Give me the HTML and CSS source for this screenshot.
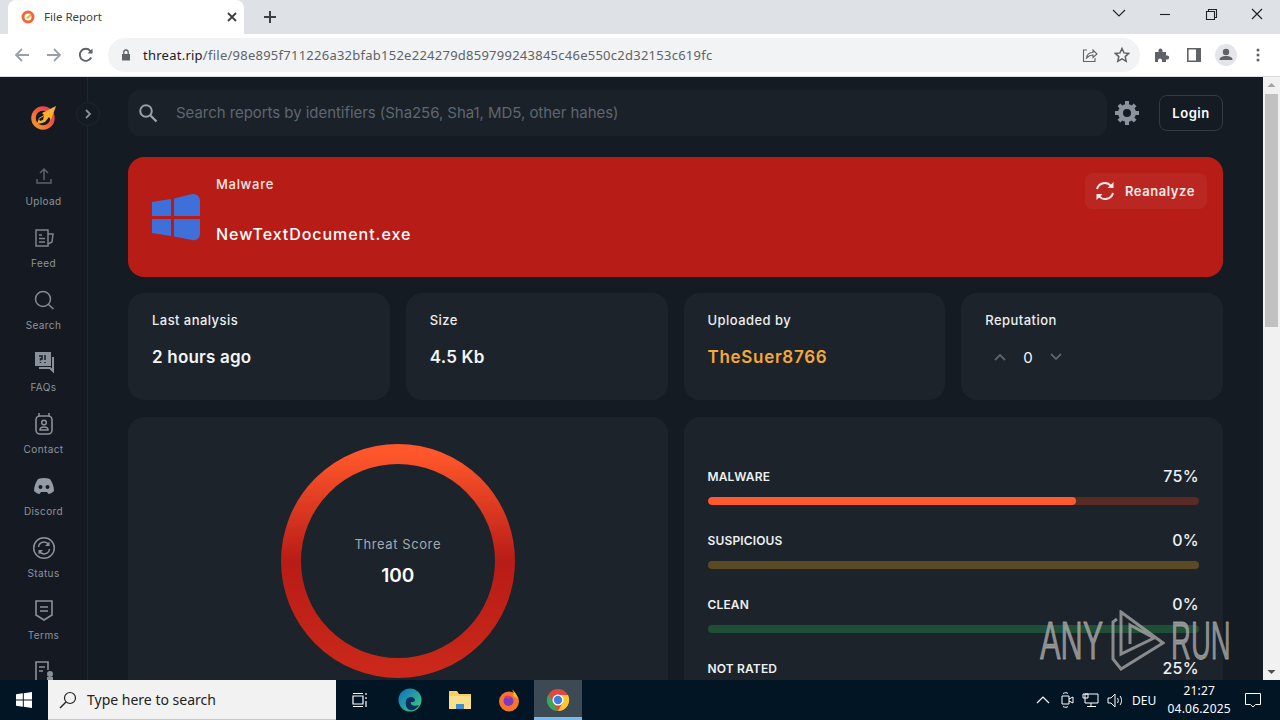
FILE: index.html
```html
<!DOCTYPE html>
<html lang="en">
<head>
    <meta charset="UTF-8">
    <title>File Report</title>
    <link rel="stylesheet" href="styles.css">
</head>
<body>
    <div class="tabstrip">
        <div class="tab">
            <svg class="favicon" width="16" height="16" viewBox="0 0 16 16"><circle cx="8" cy="8" r="5" fill="none" stroke="#f0663a" stroke-width="3"/><path d="M6 9l5-5v3l-3 3z" fill="#f9b233"/></svg>
            <span class="tab-title">File Report</span>
            <svg width="12" height="12" viewBox="0 0 12 12"><path d="M2 2l8 8M10 2l-8 8" stroke="#3c4043" stroke-width="1.8"/></svg>
        </div>
        <svg class="new-tab" width="14" height="14" viewBox="0 0 14 14"><path d="M7 1v12M1 7h12" stroke="#3c4043" stroke-width="2"/></svg>
        <div class="win-controls">
            <svg width="46" height="30" viewBox="0 0 46 30"><path d="M17 10l6 6 6-6" fill="none" stroke="#222" stroke-width="1.1"/></svg>
            <svg width="46" height="30" viewBox="0 0 46 30"><path d="M18 14.5h10" stroke="#222" stroke-width="1.1"/></svg>
            <svg width="46" height="30" viewBox="0 0 46 30"><path d="M18.5 11.5h8v8h-8zM20.5 11.5v-2h8v8h-2" fill="none" stroke="#222" stroke-width="1.1"/></svg>
            <svg width="46" height="30" viewBox="0 0 46 30"><path d="M18 9l10 10M28 9L18 19" stroke="#222" stroke-width="1.2"/></svg>
        </div>
    </div>

    <div class="toolbar">
        <div class="nav-btns">
            <svg width="16" height="16" viewBox="0 0 16 16"><path d="M15 8H2M8 2L2 8l6 6" fill="none" stroke="#9aa0a6" stroke-width="1.8"/></svg>
            <svg width="16" height="16" viewBox="0 0 16 16"><path d="M1 8h13M8 2l6 6-6 6" fill="none" stroke="#9aa0a6" stroke-width="1.8"/></svg>
            <svg width="16" height="16" viewBox="0 0 16 16"><path d="M13.2 10.5A6 6 0 1 1 12.3 3.8L14 5.5" fill="none" stroke="#5f6368" stroke-width="1.9"/><path d="M14.5 1.5v5h-5z" fill="#5f6368"/></svg>
        </div>
        <div class="omnibox">
            <svg width="10" height="12" viewBox="0 0 10 12"><path d="M1 5h8v6.500H1z" fill="#5f6368"/><path d="M2.800 5V3.200a2.200 2.200 0 0 1 4.400 0V5" fill="none" stroke="#5f6368" stroke-width="1.300"/></svg>
            <span class="url"><b>threat.rip</b>/file/98e895f711226a32bfab152e224279d859799243845c46e550c2d32153c619fc</span>
            <svg class="omni-share" width="16" height="16" viewBox="0 0 16 16"><path d="M5 3H1.500v11.500H13V11" fill="none" stroke="#5f6368" stroke-width="1.100"/><path d="M4.500 11c.5-3.500 3-5.500 6.500-5.500V3l4 4-4 3.500V8c-2.500 0-4.500 1-6.500 3z" fill="none" stroke="#5f6368" stroke-width="1.100"/></svg>
            <svg class="omni-star" width="16" height="16" viewBox="0 0 16 16"><path d="M8 1.500l2 4.400 4.700.5-3.500 3.200 1 4.700L8 11.900l-4.200 2.400 1-4.700-3.500-3.200 4.700-.5z" fill="none" stroke="#5f6368" stroke-width="1.500"/></svg>
        </div>
        <div class="tool-icons">
            <span class="tool-btn"><svg width="16" height="16" viewBox="0 0 16 16"><path d="M1 5h3.500V3.500a2 2 0 0 1 4 0V5H12v3.500h1.200a2 2 0 0 1 0 4H12V15H8v-1.500a2 2 0 0 0-4 0V15H1z" fill="#5f6368"/></svg></span>
            <span class="tool-btn"><svg width="14" height="14" viewBox="0 0 14 14"><path d="M.8.800h12.400v12.400H.8z" fill="#fff" stroke="#5f6368" stroke-width="1.600"/><path d="M9 1h4v12H9z" fill="#5f6368"/></svg></span>
            <span class="tool-btn"><svg width="22" height="22" viewBox="0 0 22 22"><circle cx="11" cy="11" r="11" fill="#e3e5ea"/><circle cx="11" cy="8" r="3.200" fill="#5f6368"/><path d="M4.500 16c0-3 3-4 6.500-4s6.500 1 6.500 4z" fill="#5f6368"/></svg></span>
            <span class="tool-btn"><svg width="4" height="14" viewBox="0 0 4 14"><circle cx="2" cy="2" r="1.500" fill="#5f6368"/><circle cx="2" cy="7" r="1.500" fill="#5f6368"/><circle cx="2" cy="12" r="1.500" fill="#5f6368"/></svg></span>
        </div>
    </div>

    <div class="viewport">
        <aside class="sidebar">
            <div class="side-top">
                <svg width="26" height="26" viewBox="0 0 26 26">
                    <defs><linearGradient id="logoRing" x1="0" y1="1" x2="1" y2="0"><stop offset="0" stop-color="#f79a2a"/><stop offset=".55" stop-color="#ef5a3c"/><stop offset="1" stop-color="#d93a60"/></linearGradient></defs>
                    <circle cx="12" cy="14" r="9.500" fill="none" stroke="url(#logoRing)" stroke-width="4.500"/>
                    <path d="M6 20l2-6 5-3-2-2 14-7-5 14-2-3-4 5-3 1z" fill="#f7b02f"/>
                    <path d="M8 15l5-3-1 4-3 1z" fill="#151b23"/>
                </svg>
            </div>
            <span class="side-toggle"><svg width="8" height="10" viewBox="0 0 8 10"><path d="M2 1l4 4-4 4" fill="none" stroke="#8b919a" stroke-width="1.800"/></svg></span>
            <nav class="side-nav">
                <a class="nav-item"><svg width="24" height="24" viewBox="0 0 24 24"><path d="M12 16V6M8 9l4-4 4 4M5 15v4h14v-4" fill="none" stroke="#5c626b" stroke-width="1.500"/></svg>Upload</a>
                <a class="nav-item"><svg width="24" height="24" viewBox="0 0 24 24"><path d="M4 4h12v16H4zM16 8h5l-1 8-4 2M7 9h3M7 12.500h6M7 16h6" fill="none" stroke="#7e848d" stroke-width="1.500"/></svg>Feed</a>
                <a class="nav-item"><svg width="24" height="24" viewBox="0 0 24 24"><circle cx="11" cy="11" r="7.500" fill="none" stroke="#858b94" stroke-width="1.500"/><path d="M16.500 16.500l5 4.500" stroke="#858b94" stroke-width="1.500"/></svg>Search</a>
                <a class="nav-item"><svg width="24" height="24" viewBox="0 0 24 24"><path d="M3 2h16v14H3z" fill="#8b919a"/><path d="M21 7v14l-3-3H7" fill="none" stroke="#8b919a" stroke-width="2"/><path d="M7 6h3v3H8.500v1.500M13 5v5M8.500 12v1M13 12v1" stroke="#171c24" stroke-width="1.500" fill="none"/></svg>FAQs</a>
                <a class="nav-item"><svg width="24" height="24" viewBox="0 0 24 24"><rect x="4" y="4" width="16" height="18" rx="4" fill="none" stroke="#8b919a" stroke-width="1.600"/><path d="M7 1v3M17 1v3M8 18c0-4 8-4 8 0z" fill="none" stroke="#8b919a" stroke-width="1.500"/><circle cx="12" cy="10.500" r="2.300" fill="none" stroke="#8b919a" stroke-width="1.500"/></svg>Contact</a>
                <a class="nav-item"><svg width="24" height="24" viewBox="0 0 24 24"><path d="M6 5c4-1.500 8-1.500 12 0 2 3 4 7 4 12-2 2-4 3-5.500 3L15 18H9l-1.500 2C6 20 4 19 2 17c0-5 2-9 4-12z" fill="#959ba4"/><circle cx="8.500" cy="13" r="2" fill="#171c24"/><circle cx="15.500" cy="13" r="2" fill="#171c24"/></svg>Discord</a>
                <a class="nav-item"><svg width="24" height="24" viewBox="0 0 24 24"><circle cx="12" cy="12" r="10.300" fill="none" stroke="#8b919a" stroke-width="1.500"/><path d="M6.500 11a5.500 5.500 0 0 1 10-2.500M17.500 13a5.500 5.500 0 0 1-10 2.500" fill="none" stroke="#8b919a" stroke-width="1.500"/><path d="M17.500 5.500V10H13zM6.500 18.500V14H11z" fill="#8b919a"/></svg>Status</a>
                <a class="nav-item"><svg width="24" height="24" viewBox="0 0 24 24"><path d="M4 3h16v14l-8 5-8-5zM8 9h8M8 13h8" fill="none" stroke="#8b919a" stroke-width="1.600"/></svg>Terms</a>
                <a class="nav-item"><svg width="24" height="24" viewBox="0 0 24 24"><path d="M13 22H4V2h12v8M7 7h6M7 11h4" fill="none" stroke="#8b919a" stroke-width="1.600"/><circle cx="18" cy="14" r="3" fill="#8b919a"/><path d="M15 17h6v6h-6z" fill="#8b919a"/></svg></a>
            </nav>
        </aside>

        <main class="main">
            <div class="topbar">
                <div class="search">
                    <svg width="20" height="20" viewBox="0 0 20 20"><circle cx="8" cy="8" r="5.800" fill="none" stroke="#9aa0a8" stroke-width="2"/><path d="M12.500 12.500l6 6" stroke="#9aa0a8" stroke-width="2.400"/></svg>
                    <span class="search-text">Search reports by identifiers (Sha256, Sha1, MD5, other hahes)</span>
                </div>
                <svg class="gear" width="26" height="26" viewBox="0 0 26 26"><circle cx="13" cy="13" r="6.500" fill="none" stroke="#8d939c" stroke-width="5"/><path d="M11 1h4v4h-4zM11 21h4v4h-4zM1 11h4v4H1zM21 11h4v4h-4zM3.500 6.300L6.300 3.500 9 6.200 6.200 9zM19.700 3.500l2.800 2.800L19.800 9 17 6.200zM3.500 19.700L6.200 17 9 19.800l-2.700 2.700zM17 19.800l2.800-2.800 2.700 2.700-2.800 2.800z" fill="#8d939c"/></svg>
                <button class="login">Login</button>
            </div>

            <section class="banner">
                <svg class="win-logo" width="48" height="48" viewBox="0 0 48 48"><path d="M0 9l19-3v17H0zM22 5.500L40 1c5 0 8 2 8 8v14H22zM0 26h19v17L0 40zM22 26h26v14c0 5-3 8-8 7l-18-3.500z" fill="#3f6fd8"/></svg>
                <div class="banner-text">
                    <div class="verdict">Malware</div>
                    <div class="file-name">NewTextDocument.exe</div>
                </div>
                <button class="reanalyze">
                    <svg width="22" height="22" viewBox="0 0 22 22"><path d="M3 9a8 8 0 0 1 14-3M19 13a8 8 0 0 1-14 3" fill="none" stroke="#fbe9e7" stroke-width="2"/><path d="M19.500 2v6h-6zM2.500 20v-6h6z" fill="#fbe9e7"/></svg>
                    Reanalyze
                </button>
            </section>

            <section class="stats">
                <div class="card stat"><div class="stat-label">Last analysis</div><div class="stat-value">2 hours ago</div></div>
                <div class="card stat"><div class="stat-label">Size</div><div class="stat-value">4.5 Kb</div></div>
                <div class="card stat"><div class="stat-label">Uploaded by</div><div class="stat-value user">TheSuer8766</div></div>
                <div class="card stat">
                    <div class="stat-label">Reputation</div>
                    <div class="vote">
                        <svg width="12" height="8" viewBox="0 0 12 8"><path d="M1 7l5-5 5 5" fill="none" stroke="#5d636c" stroke-width="1.800"/></svg>
                        <span>0</span>
                        <svg width="12" height="8" viewBox="0 0 12 8"><path d="M1 1l5 5 5-5" fill="none" stroke="#5d636c" stroke-width="1.800"/></svg>
                    </div>
                </div>
            </section>

            <section class="lower">
                <div class="card score-card">
                    <div class="ring">
                        <svg width="234" height="234" viewBox="0 0 234 234">
                            <defs><linearGradient id="ringGrad" x1="0" y1="0" x2="0" y2="1"><stop offset="0" stop-color="#ff572b"/><stop offset="0.5" stop-color="#b81c16"/><stop offset="1" stop-color="#c9281a"/></linearGradient></defs>
                            <circle cx="117" cy="117" r="107" fill="none" stroke="url(#ringGrad)" stroke-width="20"/>
                        </svg>
                        <div class="ring-text">
                            <div class="ring-label">Threat Score</div>
                            <div class="ring-value">100</div>
                        </div>
                    </div>
                </div>
                <div class="card rates">
                    <div class="rate"><div class="rate-head"><span>MALWARE</span><span class="pct">75%</span></div><div class="bar bar-red"><div class="fill" style="width:75%"></div></div></div>
                    <div class="rate"><div class="rate-head"><span>SUSPICIOUS</span><span class="pct">0%</span></div><div class="bar bar-yellow"></div></div>
                    <div class="rate"><div class="rate-head"><span>CLEAN</span><span class="pct">0%</span></div><div class="bar bar-green"></div></div>
                    <div class="rate"><div class="rate-head"><span>NOT RATED</span><span class="pct">25%</span></div><div class="bar bar-grey"></div></div>
                </div>
            </section>
        </main>

        <div class="scrollbar">
            <svg width="17" height="17" viewBox="0 0 17 17"><path d="M4.500 10l4-4 4 4z" fill="#a3a3a3"/></svg>
            <div class="thumb"></div>
            <svg class="scroll-down" width="17" height="17" viewBox="0 0 17 17"><path d="M4.500 7l4 4 4-4z" fill="#505050"/></svg>
        </div>
    </div>

    <div class="taskbar">
        <div class="start"><svg width="16" height="16" viewBox="0 0 16 16"><path d="M0 2.300l6.800-1v6.200H0zM7.800 1.200L16 0v7.500H7.800zM0 8.500h6.800v6.200l-6.800-1zM7.800 8.500H16V16l-8.200-1.200z" fill="#fff"/></svg></div>
        <div class="task-search">
            <svg width="20" height="20" viewBox="0 0 20 20"><circle cx="12" cy="8" r="5.500" fill="none" stroke="#222" stroke-width="1.200"/><path d="M8 12l-6 6" stroke="#222" stroke-width="1.400"/></svg>
            <span>Type here to search</span>
        </div>
        <div class="task-icons">
            <span class="task-icon"><svg width="16" height="16" viewBox="0 0 16 16"><path d="M1 4h10v8H1zM1 1.500h10M1 14.500h10M14 1v2M14 5v2M14 9v6" fill="none" stroke="#fff" stroke-width="1.200"/></svg></span>
            <span class="task-icon"><svg width="24" height="24" viewBox="0 0 24 24"><defs><linearGradient id="edgeGrad" x1="0" y1="0" x2="1" y2="1"><stop offset="0" stop-color="#0c6cc4"/><stop offset="1" stop-color="#3ed17c"/></linearGradient></defs><circle cx="12" cy="12" r="11.500" fill="url(#edgeGrad)"/><path d="M8 13c0-4 8-6 9-1 0 2-2 2-4 2-1 3 3 5 8 3-2 4-6 6-9 5-4-1-5-6-4-9z" fill="#0a2f5c"/></svg></span>
            <span class="task-icon"><svg width="24" height="22" viewBox="0 0 24 22"><path d="M1 2h8l2 3h12v15H1z" fill="#f6cf5c"/><path d="M1 7h22v13H1z" fill="#fbe08a"/><path d="M8 15h8v5H8z" fill="#3d8fd1"/></svg></span>
            <span class="task-icon"><svg width="24" height="24" viewBox="0 0 24 24"><circle cx="12" cy="13.500" r="10" fill="#f7752b"/><path d="M14 1c3 2 3 5 2 7l5 3c-1-4-3-8-7-10z" fill="#fbb52e"/><circle cx="11.500" cy="13" r="5" fill="#7b3ac0"/><path d="M7 9c2-2 5-2 7 0l-2 2z" fill="#e2367c"/></svg></span>
            <span class="task-icon active"><svg width="24" height="24" viewBox="0 0 24 24"><circle cx="12" cy="12" r="11" fill="#dd4b3e"/><path d="M2.500 6.500L7.500 15l4.500 8a11 11 0 0 1-9.500-16.500z" fill="#3aa757"/><path d="M12 7h10a11 11 0 0 1-10 16l4.500-8z" fill="#fcc934"/><circle cx="12" cy="12" r="5.500" fill="#fff"/><circle cx="12" cy="12" r="4.200" fill="#3c7fe0"/></svg></span>
        </div>
        <div class="tray">
            <svg width="14" height="8" viewBox="0 0 14 8"><path d="M1 7l6-6 6 6" fill="none" stroke="#fff" stroke-width="1.200"/></svg>
            <svg class="tray-meet" width="14" height="18" viewBox="0 0 14 18"><path d="M2 5h7v8H2zM9 8l4-2v6l-4-2M3 2.500c2-1 4-1 5 0M3 15.500c2 1 4 1 5 0" fill="none" stroke="#fff" stroke-width="1"/></svg>
            <svg width="17" height="15" viewBox="0 0 17 15"><path d="M3 1h13v9H3zM1 1h5v4H1zM9 10v3M5 13.500h9" fill="#021525" stroke="#fff" stroke-width="1"/></svg>
            <svg width="17" height="15" viewBox="0 0 17 15"><path d="M1 5h3l4-4v13l-4-4H1zM10.500 5c1 1.500 1 3.500 0 5M13 3c2 2.500 2 6.500 0 9" fill="none" stroke="#fff" stroke-width="1"/></svg>
            <span class="lang">DEU</span>
            <div class="clock"><div>21:27</div><div>04.06.2025</div></div>
            <svg class="notify" width="16" height="16" viewBox="0 0 16 16"><path d="M.5 1.500h15v11h-5L8 15l-2.500-2.500h-5z" fill="none" stroke="#fff" stroke-width="1"/></svg>
        </div>
    </div>

    <div class="watermark">
        <span class="wm-any"><span>ANY</span></span>
        <svg width="55" height="62" viewBox="0 0 55 62"><path d="M7 9L3 12v37l8 10 42-26L11 2v42l33-16-24-13v19" fill="none" stroke="#a9a9a9" stroke-opacity=".78" stroke-width="3"/></svg>
        <span class="wm-run"><span>RUN</span></span>
    </div>
</body>
</html>
```

FILE: styles.css
```css
* {
    box-sizing: border-box;
}

html, body {
    margin: 0;
    height: 720px;
    overflow: hidden;
}

body {
    display: flex;
    flex-direction: column;
    font-family: Inter, "Liberation Sans", sans-serif;
    position: relative;
    background: #151b23;
}

/* browser frame */
.tabstrip {
    height: 34px;
    background: #dee1e6;
    display: flex;
    align-items: flex-end;
    padding-left: 8px;
    flex-shrink: 0;
}

.tab {
    width: 236px;
    height: 34px;
    background: #fff;
    border-radius: 8px 8px 0 0;
    display: flex;
    align-items: center;
    padding: 0 6px 0 12px;
}

.tab-title {
    flex: 1;
    margin: 0 0 2px 8px;
    font: 11.5px "Noto Sans", sans-serif;
    color: #3c4043;
}

.new-tab {
    margin: 0 0 10px 19px;
}

.win-controls {
    margin-left: auto;
    align-self: flex-start;
    display: flex;
}

.toolbar {
    height: 43px;
    background: #fff;
    border-bottom: 1px solid #dadce0;
    display: flex;
    align-items: center;
    flex-shrink: 0;
    padding-bottom: 1px;
}

.nav-btns {
    width: 108px;
    padding: 0 14px;
    display: flex;
    justify-content: space-between;
}

.omnibox {
    width: 1032px;
    flex-shrink: 0;
    height: 34px;
    border-radius: 17px;
    background: #f1f3f4;
    display: flex;
    align-items: center;
    padding: 0 10px 0 13px;
}

.url {
    margin-left: 12px;
    font: 13px "Noto Sans", sans-serif;
    letter-spacing: .25px;
    color: #5f6368;
    flex: 1;
}

.url b {
    font-weight: 400;
    color: #202124;
}

.omni-star {
    margin-left: 16px;
}

.tool-icons {
    flex: 1;
    display: flex;
    align-items: center;
    padding-left: 6px;
}

.tool-btn {
    width: 32px;
    display: flex;
    align-items: center;
    justify-content: center;
}

.viewport {
    flex: 1;
    display: flex;
    min-height: 0;
    position: relative;
}

/* left rail */
.sidebar {
    width: 88px;
    flex-shrink: 0;
    background: #151a22;
    border-right: 1px solid #20262f;
    position: relative;
    display: flex;
    flex-direction: column;
}

.side-top {
    height: 87px;
    flex-shrink: 0;
    padding: 27px 0 0 31px;
}

.side-toggle {
    position: absolute;
    left: 76px;
    top: 25px;
    width: 24px;
    height: 24px;
    border-radius: 50%;
    background: #151b23;
    border: 1px solid #20262f;
    display: flex;
    align-items: center;
    justify-content: center;
}

.side-nav {
    flex: 1;
    min-height: 0;
    overflow: hidden;
}

.nav-item {
    height: 62px;
    display: flex;
    flex-direction: column;
    align-items: center;
    font-size: 10px;
    line-height: 14px;
    letter-spacing: .4px;
    color: #8d939c;
    gap: 6px;
}

.nav-item svg {
    flex-shrink: 0;
}

/* page */
.main {
    flex: 1;
    min-width: 0;
    padding: 13px 40px 0;
    overflow: hidden;
    background: #151b23;
}

.topbar {
    display: flex;
    align-items: center;
    margin-bottom: 21px;
}

.search {
    width: 979px;
    flex-shrink: 0;
    height: 46px;
    border-radius: 12px;
    background: #1b2129;
    display: flex;
    align-items: center;
    padding-left: 10px;
}

.search-text {
    margin: 0 0 2px 18px;
    font-size: 15px;
    letter-spacing: -.05px;
    color: #5f666f;
}

.gear {
    margin-left: 7px;
}

.login {
    margin-left: auto;
    width: 64px;
    height: 36px;
    border-radius: 8px;
    border: 1px solid #343a43;
    background: transparent;
    color: #fff;
    font: 600 13px Inter, sans-serif;
    letter-spacing: .5px;
}

.banner {
    height: 120px;
    border-radius: 16px;
    background: #b71c17;
    display: flex;
    align-items: center;
    padding: 0 16px 0 24px;
    margin-bottom: 16px;
    color: #fff;
}

.win-logo {
    flex-shrink: 0;
}

.banner-text {
    align-self: flex-start;
    margin-left: 16px;
    padding-top: 18px;
}

.verdict {
    font-size: 13px;
    font-weight: 500;
    letter-spacing: .7px;
    line-height: 18px;
    margin-bottom: 29px;
    color: #f8e6e4;
}

.file-name {
    font-size: 16px;
    font-weight: 500;
    letter-spacing: .95px;
    line-height: 24px;
}

.reanalyze {
    margin-left: auto;
    align-self: flex-start;
    margin-top: 16px;
    width: 122px;
    height: 36px;
    border: 0;
    border-radius: 8px;
    background: rgba(255, 255, 255, .05);
    color: #fbe9e7;
    font: 600 13px Inter, sans-serif;
    letter-spacing: .55px;
    display: flex;
    align-items: center;
    padding-left: 9px;
    gap: 9px;
}

.card {
    background: #1c232b;
    border-radius: 16px;
}

.stats {
    display: grid;
    grid-template-columns: repeat(4, 1fr);
    gap: 16px;
    margin-bottom: 17px;
}

.stat {
    height: 107px;
    padding: 18px 24px 0;
}

.stat-label {
    font-size: 13px;
    font-weight: 500;
    letter-spacing: .45px;
    line-height: 18px;
    color: #eceef0;
}

.stat-value {
    margin-top: 16px;
    font-size: 17px;
    font-weight: 600;
    letter-spacing: .2px;
    line-height: 24px;
    color: #f4f5f6;
}

.user {
    color: #f5a938;
    letter-spacing: .7px;
}

.vote {
    margin-top: 16px;
    height: 24px;
    display: flex;
    align-items: center;
    gap: 17px;
    padding-left: 9px;
    font-size: 15px;
    color: #f4f5f6;
}

.lower {
    display: grid;
    grid-template-columns: 1fr 1fr;
    gap: 16px;
}

.score-card {
    height: 320px;
    padding-top: 27px;
    display: flex;
    justify-content: center;
    align-items: flex-start;
}

.ring {
    position: relative;
    width: 234px;
    height: 234px;
}

.ring svg {
    display: block;
}

.ring-text {
    position: absolute;
    inset: 0;
    display: flex;
    flex-direction: column;
    align-items: center;
    justify-content: center;
    padding-top: 1px;
}

.ring-label {
    font-size: 13px;
    letter-spacing: .6px;
    line-height: 18px;
    color: #a5aab1;
}

.ring-value {
    margin-top: 10px;
    font-size: 19px;
    font-weight: 600;
    line-height: 26px;
    color: #fff;
}

.rates {
    height: 320px;
    padding: 49px 24px 0;
}

.rate {
    margin-bottom: 25px;
}

.rate-head {
    height: 20px;
    display: flex;
    justify-content: space-between;
    align-items: center;
    font-size: 12px;
    font-weight: 600;
    letter-spacing: .15px;
    color: #eef0f2;
    margin-bottom: 11px;
}

.pct {
    font-size: 16px;
    font-weight: 500;
    letter-spacing: .3px;
}

.bar {
    height: 8px;
    border-radius: 4px;
    overflow: hidden;
}

.fill {
    height: 100%;
    background: #ff5a2f;
    border-radius: 4px;
}

.bar-red {
    background: #5a2a25;
}

.bar-yellow {
    background: #5b4a24;
}

.bar-green {
    background: #1f5037;
}

.bar-grey {
    background: #3a4048;
}

.scrollbar {
    width: 17px;
    flex-shrink: 0;
    background: #f1f1f1;
    display: flex;
    flex-direction: column;
}

.scrollbar svg {
    flex-shrink: 0;
}

.thumb {
    height: 233px;
    margin: 0 2px;
    background: #c1c1c1;
}

.scroll-down {
    margin-top: auto;
}

/* windows taskbar */
.taskbar {
    height: 40px;
    background: #021525;
    display: flex;
    align-items: center;
    flex-shrink: 0;
    color: #fff;
}

.start {
    width: 48px;
    flex-shrink: 0;
    display: flex;
    justify-content: center;
}

.task-search {
    width: 288px;
    flex-shrink: 0;
    height: 40px;
    background: #f2f2f2;
    border-bottom: 1px solid #c8c8c8;
    display: flex;
    align-items: center;
    padding-left: 10px;
    color: #222;
    font: 14px "Noto Sans", sans-serif;
}

.task-search span {
    margin-left: 9px;
}

.task-icons {
    display: flex;
    height: 40px;
    flex-shrink: 0;
}

.task-icon {
    width: 48px;
    display: flex;
    align-items: center;
    justify-content: center;
}

.task-icon:nth-child(2) {
    width: 52px;
}

.task-icon:nth-child(3) {
    width: 47px;
}

.task-icon:nth-child(4) {
    width: 51px;
}

.task-icon.active {
    background: #3c4a56;
    border-bottom: 3px solid #76b9ed;
    padding-top: 3px;
}

.tray {
    flex: 1;
    display: flex;
    align-items: center;
    padding-left: 454px;
    font: 12px "Noto Sans", sans-serif;
    gap: 8px;
}

.tray svg, .clock, .lang {
    flex-shrink: 0;
}

.tray-meet {
    margin-left: 2px;
}

.clock {
    width: 70px;
    text-align: center;
    line-height: 18px;
    letter-spacing: .2px;
}

.notify {
    margin-left: 3px;
}

/* sits over the page content */
.watermark {
    position: absolute;
    left: 1040px;
    top: 610px;
    width: 192px;
    height: 62px;
    display: flex;
    align-items: center;
    gap: 6px;
    color: rgba(172, 172, 172, .78);
    font: 53px "Liberation Sans", sans-serif;
    pointer-events: none;
}

.wm-any, .wm-run {
    flex-shrink: 0;
    line-height: 62px;
}

.wm-any {
    width: 64px;
}

.wm-run {
    width: 60px;
}

.wm-any span, .wm-run span {
    display: block;
    -webkit-text-stroke: .8px rgba(172, 172, 172, .78);
    transform-origin: left center;
    transform: scaleX(.58);
}

.wm-run span {
    transform: scaleX(.52);
}

.watermark svg {
    flex-shrink: 0;
}
```
